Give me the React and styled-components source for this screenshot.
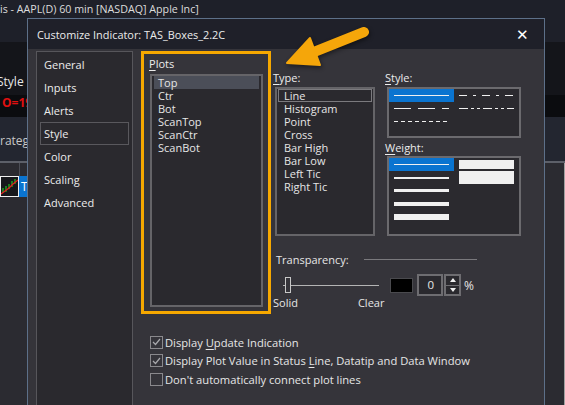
import React from "react";
import styled, { createGlobalStyle } from "styled-components";

const GlobalStyle = createGlobalStyle`
  html, body {
    margin: 0;
    padding: 0;
    background: #2b2b31;
  }
  body {
    font-family: "Open Sans", "Noto Sans", sans-serif;
    font-size: 11px;
    color: #e6e6e6;
  }
`;

const Screen = styled.div`
  position: relative;
  width: 565px;
  height: 405px;
  overflow: hidden;
  display: flex;
  flex-direction: column;
  background: #2b2b31;
`;

// ---- application behind the dialog ----

const AppTitle = styled.div`
  height: 42px;
  flex: none;
  background: #1e2029;
  color: #dcdcdc;
  font-size: 10.7px;
  line-height: 18px;
  white-space: nowrap;
`;

const ToolBand = styled.div`
  height: 53px;
  flex: none;
  background: #14151a;
  display: flex;
  align-items: flex-end;
  padding-bottom: 5px;
  box-sizing: border-box;
  font-size: 12px;
  color: #e8e8e8;
  & > span {
    margin-left: -3px;
  }
`;

const QuoteBand = styled.div`
  height: 22px;
  flex: none;
  background: #0b0c0f;
  color: #e01010;
  font-weight: bold;
  font-size: 12px;
  line-height: 16px;
  padding-left: 2px;
`;

const StrategyBand = styled.div`
  height: 46px;
  flex: none;
  background: #232630;
  color: #c8c8c8;
  font-size: 12px;
  line-height: 16px;
  padding-top: 16px;
  box-sizing: border-box;
  border-bottom: 2px solid #5d6069;
`;

const ChartArea = styled.div`
  flex: 1;
  background: #2b2b31;
  border-right: 1px solid #a0a0a0;
`;

const ChartHeader = styled.div`
  height: 13px;
  width: 19px;
  border-right: 1px solid #4c4e56;
`;

const ChartRow = styled.div`
  display: flex;
  height: 21px;
`;

const Thumb = styled.div`
  width: 17px;
  height: 19px;
  border: 1px solid #f0f0f0;
  background: #17181c;
`;

const BlueCell = styled.div`
  width: 10px;
  background: #0a74d0;
  color: #fff;
  font-size: 12px;
  line-height: 21px;
  padding-left: 2px;
`;

// ---- dialog ----

const Dialog = styled.div`
  position: absolute;
  left: 27px;
  top: 18px;
  width: 518px;
  height: 420px;
  box-sizing: border-box;
  border: 1px solid #5d7089;
  background: #35343a;
  display: flex;
  flex-direction: column;
`;

const TitleBar = styled.div`
  height: 29px;
  flex: none;
  background: #1f2029;
  display: flex;
  align-items: center;
  justify-content: space-between;
  padding: 1px 15px 0 9px;
  font-size: 10.9px;
  color: #ececec;
`;

const Close = styled.span`
  font-size: 15px;
  color: #fff;
  line-height: 1;
`;

const Body = styled.div`
  flex: 1;
  display: flex;
  padding: 2px 0 0 8px;
`;

const Nav = styled.div`
  width: 97px;
  flex: none;
  box-sizing: border-box;
  border: 1px solid #57565b;
  background: #2a292e;
  padding: 1px 3px;
`;

const NavItem = styled.div`
  height: 23px;
  box-sizing: border-box;
  border: 1px solid ${(p) => (p.$active ? "#59585d" : "transparent")};
  padding-left: 3px;
  line-height: 21px;
  color: #ececec;
`;

const Main = styled.div`
  margin-left: 8px;
  display: flex;
  flex-direction: column;
`;

const TopRow = styled.div`
  display: flex;
  align-items: flex-start;
`;

const PlotsFrame = styled.div`
  width: 130px;
  height: 263px;
  box-sizing: border-box;
  border: 3px solid #f6a800;
  display: flex;
  flex-direction: column;
  padding: 3px 5px 4px 5px;
`;

const Label = styled.div`
  height: 14px;
  line-height: 14px;
  color: #ececec;
  & u {
    text-decoration-thickness: 1px;
    text-underline-offset: 2px;
  }
`;

const ListBox = styled.div`
  box-sizing: border-box;
  border: 2px solid #656468;
  background: #2a292e;
  padding: 0 2px;
`;

const PlotsList = styled(ListBox)`
  flex: 1;
  margin: 3px 0 0 1px;
  padding-top: 0;
`;

const PlotItem = styled.div`
  height: 13px;
  line-height: 13px;
  padding-left: 4px;
  background: ${(p) => (p.$selected ? "#4b4e58" : "transparent")};
`;

const RightArea = styled.div`
  margin-left: 2px;
  padding-top: 20px;
  display: flex;
  flex-direction: column;
`;

const ListsRow = styled.div`
  display: flex;
  align-items: flex-start;
`;

const Column = styled.div`
  display: flex;
  flex-direction: column;
  margin-left: ${(p) => p.$offset || 0}px;
`;

const TypeList = styled(ListBox)`
  width: 100px;
  height: 149px;
  margin: 2px 0 0 2px;
  padding: 0 1px;
`;

const TypeItem = styled.div`
  height: 13px;
  line-height: 11px;
  box-sizing: border-box;
  padding-left: 5px;
  border: 1px solid ${(p) => (p.$selected ? "#7b7a7e" : "transparent")};
`;

const PatternBox = styled.div`
  margin: ${(p) => p.$top}px 0 0 2px;
  width: 134px;
  height: ${(p) => p.$height}px;
  box-sizing: border-box;
  border: 2px solid #6b6a6e;
  background: #2b2a2f;
  display: grid;
  grid-template-columns: 65px 65px;
  grid-template-rows: repeat(${(p) => p.$rows}, 13px);
  grid-auto-flow: ${(p) => p.$flow};
`;

const PatternCell = styled.div`
  background: ${(p) => (p.$selected ? "#0a74d0" : "transparent")};
  display: flex;
  align-items: center;
  padding-left: 5px;
`;

const Bar = styled.div`
  width: 55px;
  height: ${(p) => p.$h}px;
  background: #f0f0f0;
`;

const TransHeader = styled.div`
  display: flex;
  align-items: center;
  margin-top: 16px;
  padding-left: 3px;
`;

const Rule = styled.div`
  width: 113px;
  height: 1px;
  background: #7a797d;
  margin-left: 15px;
`;

const TransControls = styled.div`
  display: flex;
  align-items: center;
  margin-top: 7px;
  height: 22px;
`;

const Slider = styled.div`
  position: relative;
  width: 96px;
  height: 16px;
  margin-left: 10px;
  &::before {
    content: "";
    position: absolute;
    left: 0;
    right: 0;
    top: 8px;
    height: 1px;
    background: #b4b4b4;
  }
`;

const Thumb2 = styled.div`
  position: absolute;
  left: 2px;
  top: 0;
  width: 4px;
  height: 14px;
  border: 1px solid #c8c8c8;
  background: #35343a;
`;

const Swatch = styled.div`
  width: 23px;
  height: 15px;
  box-sizing: border-box;
  margin-left: 11px;
  background: #000;
  border: 1px solid #4a4a4e;
`;

const NumberBox = styled.div`
  width: 26px;
  height: 22px;
  box-sizing: border-box;
  margin-left: 4px;
  border: 2px solid #6e6d71;
  background: #2a292e;
  text-align: right;
  padding-right: 7px;
  line-height: 18px;
  font-size: 11.5px;
`;

const Spinner = styled.div`
  width: 17px;
  height: 22px;
  box-sizing: border-box;
  margin-left: 1px;
  border: 2px solid #6e6d71;
  display: flex;
  flex-direction: column;
`;

const SpinHalf = styled.div`
  flex: 1;
  display: flex;
  align-items: center;
  justify-content: center;
  background: #2a292e;
  & + & {
    border-top: 1px solid #6e6d71;
  }
  &::after {
    content: "";
    border-left: 3px solid transparent;
    border-right: 3px solid transparent;
    ${(p) => (p.$up ? "border-bottom: 4px solid #f0f0f0;" : "border-top: 4px solid #f0f0f0;")}
  }
`;

const Percent = styled.span`
  margin-left: 3px;
  font-size: 12px;
`;

const TransLabels = styled.div`
  display: flex;
  line-height: 14px;
  & > span:last-child {
    margin-left: 60px;
  }
`;

const Checks = styled.div`
  margin: 19px 0 0 9px;
  display: flex;
  flex-direction: column;
  font-size: 11.2px;
`;

const CheckRow = styled.div`
  height: 18.5px;
  display: flex;
  align-items: center;
  color: #e6e6e6;
  & u {
    text-underline-offset: 2px;
  }
`;

const Box = styled.div`
  width: 13px;
  height: 13px;
  box-sizing: border-box;
  border: 1px solid #8a898d;
  margin-right: 2px;
  display: flex;
  align-items: center;
  justify-content: center;
`;

const Arrow = styled.svg`
  position: absolute;
  left: 280px;
  top: 24px;
  filter: drop-shadow(1px 2px 2px rgba(0, 0, 0, 0.45));
`;

const styles = [
  { dash: "none", selected: true },
  { dash: "8 6 3 6" },
  { dash: "17 7" },
  { dash: "9 3 3 3 3 3" },
  { dash: "4 3" },
];

function Check({ checked, children }) {
  return (
    <CheckRow>
      <Box>
        {checked && (
          <svg width="9" height="8" viewBox="0 0 9 8">
            <path d="M1 4 L3.5 6.5 L8 1" fill="none" stroke="#a8a8ac" strokeWidth="1.2" />
          </svg>
        )}
      </Box>
      <span>{children}</span>
    </CheckRow>
  );
}

export default function App() {
  return (
    <>
      <GlobalStyle />
      <Screen>
        <AppTitle>is - AAPL(D) 60 min [NASDAQ] Apple Inc]</AppTitle>
        <ToolBand>
          <span>Style</span>
        </ToolBand>
        <QuoteBand>O=19</QuoteBand>
        <StrategyBand>rateg</StrategyBand>
        <ChartArea>
          <ChartHeader />
          <ChartRow>
            <Thumb>
              <svg width="17" height="19" viewBox="0 0 17 19">
                <path d="M2 16 L2 11 M5 15 L5 9 M8 12 L8 7 M11 10 L11 4 M14 7 L14 2" stroke="#1fc41f" strokeWidth="1.2" />
                <path d="M0 17 L4 14 L8 11 L12 7 L17 3" stroke="#e02020" strokeWidth="1.3" fill="none" />
              </svg>
            </Thumb>
            <BlueCell>T</BlueCell>
          </ChartRow>
        </ChartArea>

        <Dialog>
          <TitleBar>
            <span>Customize Indicator: TAS_Boxes_2.2C</span>
            <Close>✕</Close>
          </TitleBar>
          <Body>
            <Nav>
              {["General", "Inputs", "Alerts", "Style", "Color", "Scaling", "Advanced"].map((n) => (
                <NavItem key={n} $active={n === "Style"}>
                  {n}
                </NavItem>
              ))}
            </Nav>
            <Main>
              <TopRow>
                <PlotsFrame>
                  <Label>
                    <u>P</u>lots
                  </Label>
                  <PlotsList>
                    {["Top", "Ctr", "Bot", "ScanTop", "ScanCtr", "ScanBot"].map((p, i) => (
                      <PlotItem key={p} $selected={i === 0}>
                        {p}
                      </PlotItem>
                    ))}
                  </PlotsList>
                </PlotsFrame>
                <RightArea>
                  <ListsRow>
                    <Column>
                      <Label>
                        <u>T</u>ype:
                      </Label>
                      <TypeList>
                        {["Line", "Histogram", "Point", "Cross", "Bar High", "Bar Low", "Left Tic", "Right Tic"].map(
                          (t, i) => (
                            <TypeItem key={t} $selected={i === 0}>
                              {t}
                            </TypeItem>
                          )
                        )}
                      </TypeList>
                    </Column>
                    <Column $offset={10}>
                      <Label>
                        <u>S</u>tyle:
                      </Label>
                      <PatternBox $top={2} $height={51} $rows={3} $flow="row">
                        {styles.map((s, i) => (
                          <PatternCell key={i} $selected={s.selected}>
                            <svg width="55" height="3">
                              <line
                                x1="0"
                                y1="1.5"
                                x2="55"
                                y2="1.5"
                                stroke="#f0f0f0"
                                strokeWidth="1.2"
                                strokeDasharray={s.dash}
                              />
                            </svg>
                          </PatternCell>
                        ))}
                      </PatternBox>
                      <Label style={{ marginTop: 3 }}>
                        <u>W</u>eight:
                      </Label>
                      <PatternBox $top={1} $height={80} $rows={5} $flow="column">
                        {[1, 2, 3, 4, 6, 9, 13].map((h, i) => (
                          <PatternCell key={i} $selected={i === 0}>
                            <Bar $h={h} />
                          </PatternCell>
                        ))}
                      </PatternBox>
                    </Column>
                  </ListsRow>
                  <TransHeader>
                    <span>Transparency:</span>
                    <Rule />
                  </TransHeader>
                  <TransControls>
                    <Slider>
                      <Thumb2 />
                    </Slider>
                    <Swatch />
                    <NumberBox>0</NumberBox>
                    <Spinner>
                      <SpinHalf $up />
                      <SpinHalf />
                    </Spinner>
                    <Percent>%</Percent>
                  </TransControls>
                  <TransLabels>
                    <span>Solid</span>
                    <span>Clear</span>
                  </TransLabels>
                </RightArea>
              </TopRow>
              <Checks>
                <Check checked>
                  Display <u>U</u>pdate Indication
                </Check>
                <Check checked>
                  Display Plot Value in Status <u>L</u>ine, Datatip and Data Window
                </Check>
                <Check>Don't automatically connect plot lines</Check>
              </Checks>
            </Main>
          </Body>
        </Dialog>

        <Arrow width="92" height="48" viewBox="0 0 92 48">
          <line x1="84" y1="8" x2="34" y2="28" stroke="#f5a60a" strokeWidth="10" strokeLinecap="round" />
          <polygon
            points="7,39 30,14 40,41"
            fill="#f5a60a"
            stroke="#f5a60a"
            strokeWidth="2"
            strokeLinejoin="round"
          />
        </Arrow>
      </Screen>
    </>
  );
}
